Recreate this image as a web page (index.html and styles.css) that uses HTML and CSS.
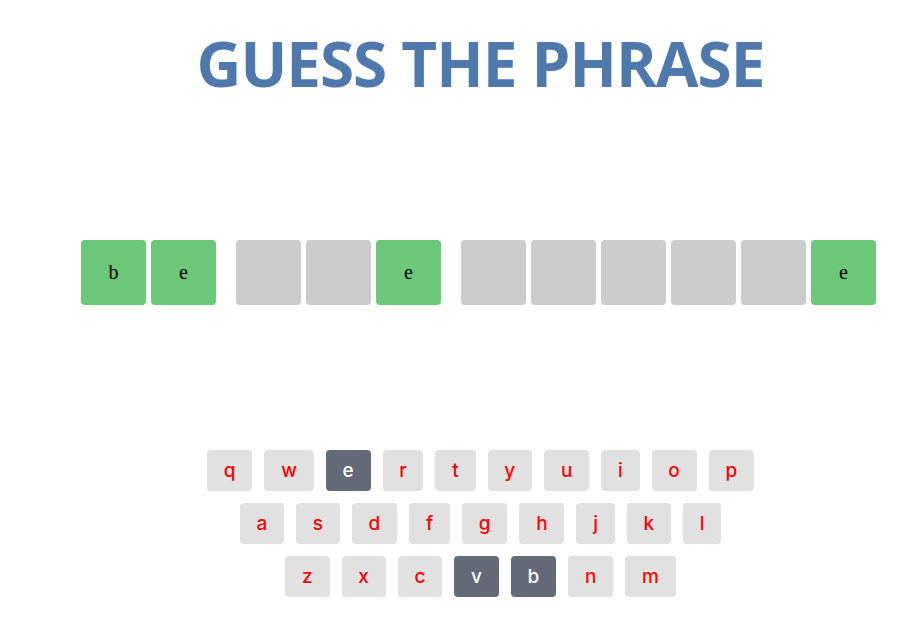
FILE: index.html
```html
<!DOCTYPE html>
<html lang="en">
<head>
<meta charset="utf-8">
<title>Guess the phrase</title>
<link rel="stylesheet" href="styles.css">
</head>
<body>
<main class="app">
  <h1 class="title">GUESS THE PHRASE</h1>
  <section class="phrase">
    <div class="word">
      <div class="tile found">b</div>
      <div class="tile found">e</div>
    </div>
    <div class="word">
      <div class="tile"></div>
      <div class="tile"></div>
      <div class="tile found">e</div>
    </div>
    <div class="word">
      <div class="tile"></div>
      <div class="tile"></div>
      <div class="tile"></div>
      <div class="tile"></div>
      <div class="tile"></div>
      <div class="tile found">e</div>
    </div>
  </section>
  <section class="keyboard">
    <div class="krow">
      <button class="key">q</button>
      <button class="key">w</button>
      <button class="key used">e</button>
      <button class="key">r</button>
      <button class="key">t</button>
      <button class="key">y</button>
      <button class="key">u</button>
      <button class="key">i</button>
      <button class="key">o</button>
      <button class="key">p</button>
    </div>
    <div class="krow">
      <button class="key">a</button>
      <button class="key">s</button>
      <button class="key">d</button>
      <button class="key">f</button>
      <button class="key">g</button>
      <button class="key">h</button>
      <button class="key">j</button>
      <button class="key">k</button>
      <button class="key">l</button>
    </div>
    <div class="krow">
      <button class="key">z</button>
      <button class="key">x</button>
      <button class="key">c</button>
      <button class="key used">v</button>
      <button class="key used">b</button>
      <button class="key">n</button>
      <button class="key">m</button>
    </div>
  </section>
</main>
</body>
</html>
```

FILE: styles.css
```css
html {
  overflow: hidden;
}
body {
  margin: 8px;
  background: #ffffff;
}
.app {
  width: 945px;
  display: flex;
  flex-direction: column;
  align-items: center;
}
.title {
  margin: 11px 0 0;
  font-family: "Open Sans", sans-serif;
  font-weight: 700;
  font-size: 62px;
  line-height: 88px;
  color: #4f79ad;
  letter-spacing: -1px;
}
.phrase {
  margin-top: 133px;
  display: flex;
  gap: 20px;
  padding-right: 4px;
}
.word {
  display: flex;
  gap: 5px;
}
.tile {
  width: 65px;
  height: 65px;
  border-radius: 4px;
  background: #cccccc;
  display: flex;
  align-items: center;
  justify-content: center;
  font-family: "Liberation Serif", serif;
  font-size: 20px;
  color: #000;
}
.tile.found {
  background: #6bc878;
}
.keyboard {
  margin-top: 145px;
  display: flex;
  flex-direction: column;
  align-items: center;
  gap: 12px;
}
.krow {
  display: flex;
  gap: 12px;
}
.key {
  height: 41px;
  padding: 0 16.8px;
  border: none;
  border-radius: 4px;
  background: #e1e1e1;
  color: #ff0000;
  font-family: Inter, sans-serif;
  font-weight: 500;
  font-size: 19px;
  line-height: 41px;
}
.key.used {
  background: #646a76;
  color: #ffffff;
}
```
